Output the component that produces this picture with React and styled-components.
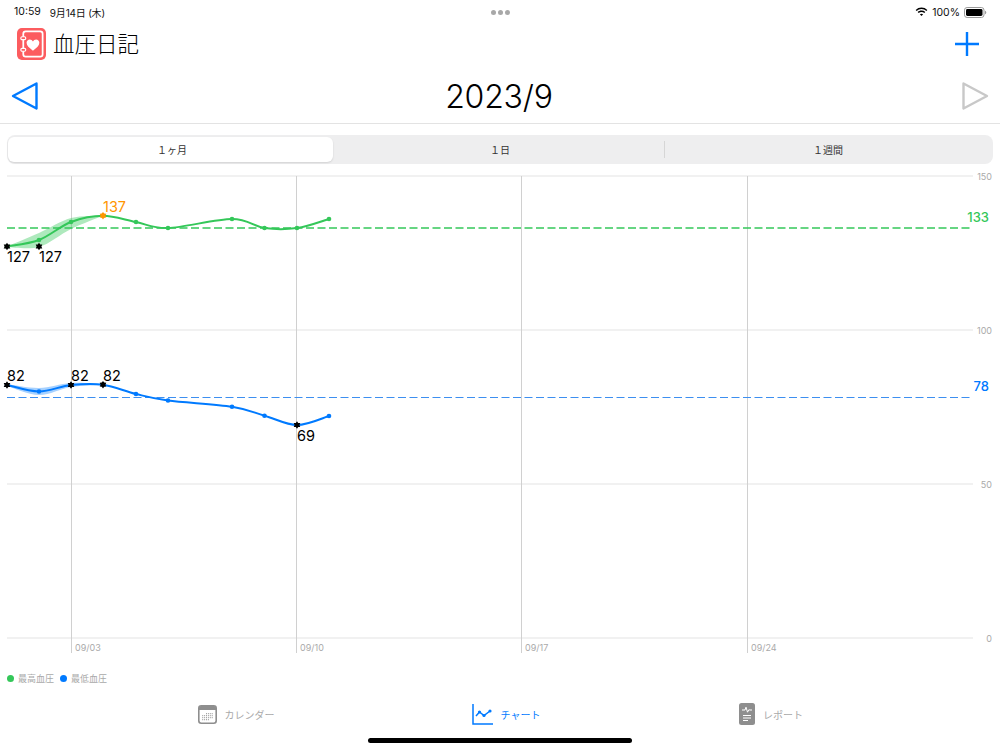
import React from "react";
import styled, { createGlobalStyle } from "styled-components";

const GlobalStyle = createGlobalStyle`
  html, body {
    margin: 0;
    padding: 0;
    background: #fff;
  }
  body {
    font-family: Inter, "Noto Sans CJK JP", sans-serif;
  }
`;

const GREEN = "#34c759";
const BLUE = "#007aff";
const ORANGE = "#ff9500";
const TOP = 170;

const greenPts = [[7, 246.5], [39, 240], [71, 222], [103, 215.7], [136, 222], [168, 228], [232, 219], [264.5, 228], [297, 228], [329, 219]];
const bluePts = [[7, 385], [39, 391.5], [71, 385], [103, 384.7], [136, 394], [168, 400.5], [232, 406.7], [264.5, 415.7], [297, 425], [329, 416]];

// catmull-rom through the points, gives the soft curve of the chart
function smooth(pts) {
  let d = `M${pts[0][0]} ${pts[0][1] - TOP}`;
  for (let i = 0; i < pts.length - 1; i++) {
    const p0 = pts[i - 1] || pts[i];
    const p1 = pts[i];
    const p2 = pts[i + 1];
    const p3 = pts[i + 2] || p2;
    const c1x = p1[0] + (p2[0] - p0[0]) / 6;
    const c1y = p1[1] + (p2[1] - p0[1]) / 6;
    const c2x = p2[0] - (p3[0] - p1[0]) / 6;
    const c2y = p2[1] - (p3[1] - p1[1]) / 6;
    d += ` C${c1x} ${c1y - TOP} ${c2x} ${c2y - TOP} ${p2[0]} ${p2[1] - TOP}`;
  }
  return d;
}

function band(upper, lower) {
  const up = smooth(upper);
  const low = smooth([...lower].reverse()).replace("M", "L");
  return `${up} ${low} Z`;
}

const gridY = [
  { y: 176, label: "150" },
  { y: 330, label: "100" },
  { y: 484, label: "50" },
  { y: 638, label: "0" },
];
const weeks = [
  { x: 71.5, label: "09/03" },
  { x: 296.5, label: "09/10" },
  { x: 521.5, label: "09/17" },
  { x: 747.5, label: "09/24" },
];

function Star({ x, y, color = "#000" }) {
  const pts = [];
  for (let i = 0; i < 12; i++) {
    const r = i % 2 === 0 ? 3.8 : 2.4;
    const a = (Math.PI / 6) * i + Math.PI / 2;
    pts.push(`${x + r * Math.cos(a)},${y - TOP + r * Math.sin(a)}`);
  }
  return <polygon points={pts.join(" ")} fill={color} />;
}

function Chart() {
  return (
    <ChartSvg viewBox="0 0 1000 495">
      {gridY.map((g) => (
        <g key={g.y}>
          <line x1="7" x2="973" y1={g.y - TOP} y2={g.y - TOP} stroke="#e3e3e3" strokeWidth="1" />
          <TickText x="992" y={g.y - TOP + 3.5} textAnchor="end">{g.label}</TickText>
        </g>
      ))}
      {weeks.map((w) => (
        <g key={w.x}>
          <line x1={w.x} x2={w.x} y1={176 - TOP} y2={653 - TOP} stroke="#d0d0d0" strokeWidth="1" />
          <TickText x={w.x + 3.5} y={651 - TOP}>{w.label}</TickText>
        </g>
      ))}

      <line x1="7" x2="970" y1={228 - TOP} y2={228 - TOP} stroke={GREEN} strokeWidth="1.6" strokeDasharray="8 3.5" />
      <line x1="7" x2="970" y1={397.5 - TOP} y2={397.5 - TOP} stroke="#3d8ff0" strokeWidth="1.2" strokeDasharray="8 3.5" />
      <AvgText x="989" y={221.5 - TOP} textAnchor="end" fill={GREEN}>133</AvgText>
      <AvgText x="989" y={391 - TOP} textAnchor="end" fill={BLUE}>78</AvgText>

      <path
        d={band(
          [[7, 246.5], [39, 233], [71, 218], [103, 215.7]],
          [[7, 247], [39, 247], [71, 229], [103, 215.7]]
        )}
        fill={GREEN}
        opacity="0.4"
      />
      <path
        d={band(
          [[7, 384], [39, 388], [71, 383], [103, 384]],
          [[7, 386], [39, 395], [71, 387], [103, 385]]
        )}
        fill={BLUE}
        opacity="0.35"
      />

      <path d={smooth(greenPts)} fill="none" stroke={GREEN} strokeWidth="2" />
      <path d={smooth(bluePts)} fill="none" stroke={BLUE} strokeWidth="2" />
      {greenPts.map((p) => (
        <circle key={p[0]} cx={p[0]} cy={p[1] - TOP} r="2.3" fill={GREEN} />
      ))}
      {bluePts.map((p) => (
        <circle key={p[0]} cx={p[0]} cy={p[1] - TOP} r="2.3" fill={BLUE} />
      ))}

      <Star x={7} y={246.5} />
      <Star x={39} y={246.5} />
      <Star x={103} y={215.7} color={ORANGE} />
      <Star x={7} y={385} />
      <Star x={71} y={385} />
      <Star x={103} y={384.7} />
      <Star x={297} y={425} />

      <ValueText x="7" y={262 - TOP}>127</ValueText>
      <ValueText x="39" y={262 - TOP}>127</ValueText>
      <ValueText x="103" y={212 - TOP} fill={ORANGE}>137</ValueText>
      <ValueText x="7" y={381 - TOP}>82</ValueText>
      <ValueText x="71" y={381 - TOP}>82</ValueText>
      <ValueText x="103" y={381 - TOP}>82</ValueText>
      <ValueText x="297" y={441 - TOP}>69</ValueText>
    </ChartSvg>
  );
}

function WifiIcon() {
  return (
    <svg width="13" height="10" viewBox="0 0 16 12">
      <path d="M8 2.3c2.3 0 4.4.9 6 2.4l1.2-1.3A10.4 10.4 0 0 0 8 .5 10.4 10.4 0 0 0 .8 3.4L2 4.7a8.6 8.6 0 0 1 6-2.4z" fill="#000" />
      <path d="M8 5.9c1.3 0 2.5.5 3.4 1.3l1.3-1.3A6.9 6.9 0 0 0 8 4.1c-1.8 0-3.4.7-4.7 1.8l1.3 1.3A5 5 0 0 1 8 5.9z" fill="#000" />
      <path d="M8 8c-.8 0-1.5.3-2 .8L8 11l2-2.2c-.5-.5-1.2-.8-2-.8z" fill="#000" />
    </svg>
  );
}

function BatteryIcon() {
  return (
    <svg width="23" height="11" viewBox="0 0 23 11">
      <rect x="0.5" y="0.5" width="19.5" height="10" rx="2.6" fill="none" stroke="#9a9a9a" />
      <rect x="2" y="2" width="16.5" height="7" rx="1.4" fill="#000" />
      <path d="M21 3.8c.8.2 1.3.9 1.3 1.7s-.5 1.5-1.3 1.7z" fill="#9a9a9a" />
    </svg>
  );
}

function AppIcon() {
  return (
    <svg width="29" height="32" viewBox="0 0 30 33">
      <rect width="30" height="33" rx="5" fill="#fc5c5f" />
      <rect x="6.5" y="3.5" width="20" height="26" rx="2.5" fill="none" stroke="#fff" strokeWidth="1.8" />
      <rect x="4" y="9" width="5" height="3" rx="1.2" fill="#fc5c5f" stroke="#fff" strokeWidth="1.2" />
      <rect x="4" y="21" width="5" height="3" rx="1.2" fill="#fc5c5f" stroke="#fff" strokeWidth="1.2" />
      <path d="M16.5 23.5c-4-3-6.6-5.3-6.6-8.2 0-2 1.5-3.4 3.3-3.4 1.4 0 2.6.8 3.3 2 .7-1.2 1.9-2 3.3-2 1.8 0 3.3 1.4 3.3 3.4 0 2.9-2.6 5.2-6.6 8.2z" fill="#fff" />
    </svg>
  );
}

function Triangle({ left, color }) {
  return (
    <svg width="28" height="30" viewBox="0 0 28 30">
      <path
        d={left ? "M25.5 2.5L2 15l23.5 12.5z" : "M2.5 2.5L26 15 2.5 27.5z"}
        fill="none"
        stroke={color}
        strokeWidth="2.4"
        strokeLinejoin="round"
      />
    </svg>
  );
}

function PlusIcon() {
  return (
    <svg width="26" height="26" viewBox="0 0 26 26">
      <path d="M13 1v24M1 13h24" stroke={BLUE} strokeWidth="2.4" fill="none" />
    </svg>
  );
}

function CalendarIcon() {
  const dots = [];
  for (let r = 0; r < 4; r++) {
    for (let c = 0; c < 6; c++) {
      if ((r === 0 && c < 2) || (r === 3 && c > 3)) continue;
      dots.push(<rect key={`${r}${c}`} x={4.2 + c * 1.9} y={8.2 + r * 2} width="1" height="1" fill="#8e8e8e" />);
    }
  }
  return (
    <svg width="19" height="19" viewBox="0 0 19 19">
      <rect x="0.8" y="0.8" width="17.4" height="17.4" rx="2.5" fill="#fff" stroke="#8e8e8e" strokeWidth="1.6" />
      <path d="M1 5V3a2 2 0 0 1 2-2h13a2 2 0 0 1 2 2v2z" fill="#8e8e8e" />
      {dots}
    </svg>
  );
}

function ChartIcon() {
  return (
    <svg width="21" height="21" viewBox="0 0 21 21">
      <path d="M1 0v20h20" fill="none" stroke={BLUE} strokeWidth="1.5" />
      <path d="M4 12l3.5-4 4.5 3.5L18 7" fill="none" stroke={BLUE} strokeWidth="1.5" />
      <circle cx="7.5" cy="8" r="1.6" fill={BLUE} />
      <circle cx="12" cy="11.5" r="1.6" fill={BLUE} />
      <circle cx="18" cy="7" r="1.6" fill={BLUE} />
    </svg>
  );
}

function ReportIcon() {
  return (
    <svg width="16" height="22" viewBox="0 0 16 22">
      <rect width="16" height="22" rx="2.5" fill="#8e8e8e" />
      <path d="M3 7h3l1-2.8 1.5 5L10 6.5l.6.5H13" fill="none" stroke="#fff" strokeWidth="1" />
      <path d="M4 12.5h8M4 15h8M4 17.5h5" fill="none" stroke="#fff" strokeWidth="1" />
    </svg>
  );
}

export default function App() {
  return (
    <>
      <GlobalStyle />
      <Screen>
        <StatusBar>
          <StatusText>
            <span>10:59</span>
            <StatusDate>9月14日 (木)</StatusDate>
          </StatusText>
          <Dots>
            <i />
            <i />
            <i />
          </Dots>
          <StatusRight>
            <WifiIcon />
            <span>100%</span>
            <BatteryIcon />
          </StatusRight>
        </StatusBar>

        <TitleRow>
          <Brand>
            <AppIcon />
            <Title>血圧日記</Title>
          </Brand>
          <PlusIcon />
        </TitleRow>

        <MonthRow>
          <Triangle left color={BLUE} />
          <Month>2023/9</Month>
          <Triangle color="#c8c8c8" />
        </MonthRow>

        <Segments>
          <Segment $active>１ヶ月</Segment>
          <Segment>１日</Segment>
          <Segment $divider>１週間</Segment>
        </Segments>

        <Chart />

        <Legend>
          <LegendItem $color={GREEN}>最高血圧</LegendItem>
          <LegendItem $color={BLUE}>最低血圧</LegendItem>
        </Legend>

        <TabBar>
          <Tab>
            <CalendarIcon />
            <span>カレンダー</span>
          </Tab>
          <Tab $active>
            <ChartIcon />
            <span>チャート</span>
          </Tab>
          <Tab>
            <ReportIcon />
            <span>レポート</span>
          </Tab>
        </TabBar>

        <HomeBar />
      </Screen>
    </>
  );
}

const Screen = styled.div`
  width: 1000px;
  height: 750px;
  display: flex;
  flex-direction: column;
  overflow: hidden;
  background: #fff;
  color: #000;
`;

const StatusBar = styled.div`
  height: 22px;
  flex: none;
  box-sizing: border-box;
  display: grid;
  grid-template-columns: 1fr auto 1fr;
  align-items: center;
  padding: 2px 13px 0 14px;
  font-size: 10.5px;
  color: #111;
`;

const StatusText = styled.div`
  display: flex;
  gap: 9px;
`;

const StatusDate = styled.span`
  font-size: 10px;
  letter-spacing: -0.2px;
`;

const Dots = styled.div`
  display: flex;
  gap: 2px;
  i {
    width: 5px;
    height: 5px;
    border-radius: 50%;
    background: #a8a8a8;
  }
`;

const StatusRight = styled.div`
  display: flex;
  justify-content: flex-end;
  align-items: center;
  gap: 4px;
`;

const TitleRow = styled.div`
  height: 44px;
  flex: none;
  display: flex;
  justify-content: space-between;
  align-items: center;
  padding: 0 20px 0 17px;
`;

const Brand = styled.div`
  display: flex;
  align-items: center;
  gap: 7px;
`;

const Title = styled.div`
  font-family: "Noto Sans CJK JP", sans-serif;
  font-size: 21.5px;
  font-weight: 300;
  line-height: 30px;
  margin-top: -3px;
`;

const MonthRow = styled.div`
  height: 58px;
  flex: none;
  display: flex;
  justify-content: space-between;
  align-items: center;
  padding: 3px 11px 0 11px;
  box-sizing: border-box;
  border-bottom: 1px solid #e3e3e3;
`;

const Month = styled.div`
  font-size: 32px;
  font-weight: 300;
  letter-spacing: -0.2px;
  margin-left: -2px;
`;

const Segments = styled.div`
  flex: none;
  height: 29px;
  margin: 11px 7px 0;
  padding: 1px;
  box-sizing: border-box;
  display: grid;
  grid-template-columns: repeat(3, 328px);
  background: #eeeeef;
  border-radius: 8px;
`;

const Segment = styled.div`
  position: relative;
  display: flex;
  align-items: center;
  justify-content: center;
  font-family: "Noto Sans CJK JP", sans-serif;
  font-size: 10px;
  color: #333;
  z-index: 0;

  &::before {
    content: "";
    display: ${(p) => (p.$active ? "block" : "none")};
    position: absolute;
    inset: 1px 3px 1px 0;
    background: #fff;
    border-radius: 6px;
    box-shadow: 0 1px 2px rgba(0, 0, 0, 0.12);
    z-index: -1;
  }

  &::after {
    content: "";
    display: ${(p) => (p.$divider ? "block" : "none")};
    position: absolute;
    left: 0;
    top: 5px;
    bottom: 5px;
    width: 1px;
    background: #d6d6d6;
  }
`;

const ChartSvg = styled.svg`
  display: block;
  flex: none;
  width: 1000px;
  height: 495px;
  margin-top: 6px;
`;

const TickText = styled.text`
  font-family: Inter, sans-serif;
  font-size: 9px;
  fill: #aaa;
`;

const AvgText = styled.text`
  font-family: Inter, sans-serif;
  font-size: 13px;
  font-weight: 500;
`;

const ValueText = styled.text`
  font-family: Inter, sans-serif;
  font-size: 14.5px;
`;

const Legend = styled.div`
  flex: none;
  height: 14px;
  margin-top: 6px;
  padding-left: 7px;
  display: flex;
  align-items: center;
  gap: 6px;
`;

const LegendItem = styled.div`
  display: flex;
  align-items: center;
  gap: 4px;
  font-family: "Noto Sans CJK JP", sans-serif;
  font-size: 9px;
  color: #a9a9a9;

  &::before {
    content: "";
    width: 7px;
    height: 7px;
    border-radius: 50%;
    background: ${(p) => p.$color};
  }
`;

const TabBar = styled.div`
  flex: none;
  height: 34px;
  margin-top: 12px;
  padding-left: 101px;
  display: grid;
  grid-template-columns: 270px 270px 260px;
`;

const Tab = styled.div`
  display: flex;
  align-items: center;
  justify-content: center;
  gap: 8px;
  font-family: "Noto Sans CJK JP", sans-serif;
  font-size: 10px;
  color: ${(p) => (p.$active ? BLUE : "#a9a9a9")};
`;

const HomeBar = styled.div`
  flex: none;
  width: 264px;
  height: 5px;
  margin: 7px auto 0;
  border-radius: 3px;
  background: #000;
`;
